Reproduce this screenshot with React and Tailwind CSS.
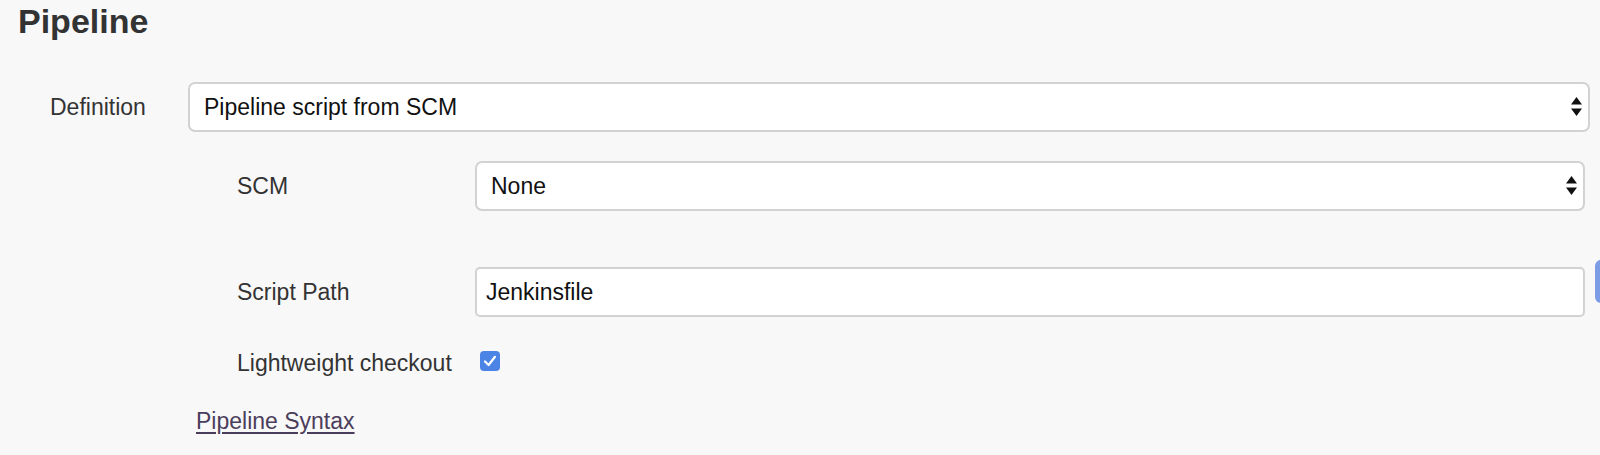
import React from "react";

function Arrows() {
  return (
    <svg width="11" height="20" viewBox="0 0 11 20" className="shrink-0">
      <path d="M5.5 0 L11 7.5 L0 7.5 Z" fill="#111" />
      <path d="M0 11.5 L11 11.5 L5.5 19 Z" fill="#111" />
    </svg>
  );
}

function SelectBox({ value, className }) {
  return (
    <div
      className={
        "flex h-[50px] shrink-0 items-center justify-between rounded-[7px] border-2 border-[#d2d2d2] bg-white pl-[14px] pr-[6px] text-[23px] text-[#111] " +
        className
      }
    >
      <span>{value}</span>
      <Arrows />
    </div>
  );
}

export default function App() {
  return (
    <div
      className="relative h-[455px] w-[1600px] overflow-hidden bg-[#f8f8f8] text-[#333]"
      style={{ fontFamily: '"Liberation Sans", Arial, sans-serif' }}
    >
      <h1 className="ml-[18px] mt-[1px] text-[34px] font-bold leading-[40px] text-[#333]">
        Pipeline
      </h1>

      <div className="mt-[41px] flex items-center">
        <div className="w-[188px] shrink-0 pl-[50px] text-[23px] text-[#333]">Definition</div>
        <SelectBox value="Pipeline script from SCM" className="w-[1402px]" />
      </div>

      <div className="ml-[188px]">
        <div className="mt-[29px] flex items-center">
          <div className="w-[287px] shrink-0 pl-[49px] text-[23px] text-[#333]">SCM</div>
          <SelectBox value="None" className="w-[1110px]" />
        </div>

        <div className="mt-[56px] flex items-center">
          <div className="w-[287px] shrink-0 pl-[49px] text-[23px] text-[#333]">Script Path</div>
          <div className="flex h-[50px] w-[1110px] shrink-0 items-center rounded-[5px] border-2 border-[#d2d2d2] bg-white pl-[9px] text-[23px] text-[#111]">
            Jenkinsfile
          </div>
          <div className="ml-[10px] -mt-[7px] h-[43px] w-[30px] shrink-0 self-start rounded-l-[6px] bg-[#7c9ce6]" />
        </div>

        <div className="mt-[29px] flex items-center">
          <div className="w-[287px] shrink-0 pl-[49px] text-[23px] text-[#333]">Lightweight checkout</div>
          <div className="mb-[4px] ml-[5px] flex h-[20px] w-[20px] shrink-0 items-center justify-center rounded-[4px] bg-[#4c84e6]">
            <svg width="16" height="16" viewBox="0 0 16 16">
              <path d="M3 8.5 L6.6 12 L13 3.8" fill="none" stroke="white" strokeWidth="2.2" strokeLinecap="round" strokeLinejoin="round" />
            </svg>
          </div>
        </div>

        <div className="mt-[23px] pl-[8px]">
          <a href="#" className="text-[23px] text-[#4b3d5c] underline underline-offset-[3px]">
            Pipeline Syntax
          </a>
        </div>
      </div>
    </div>
  );
}
